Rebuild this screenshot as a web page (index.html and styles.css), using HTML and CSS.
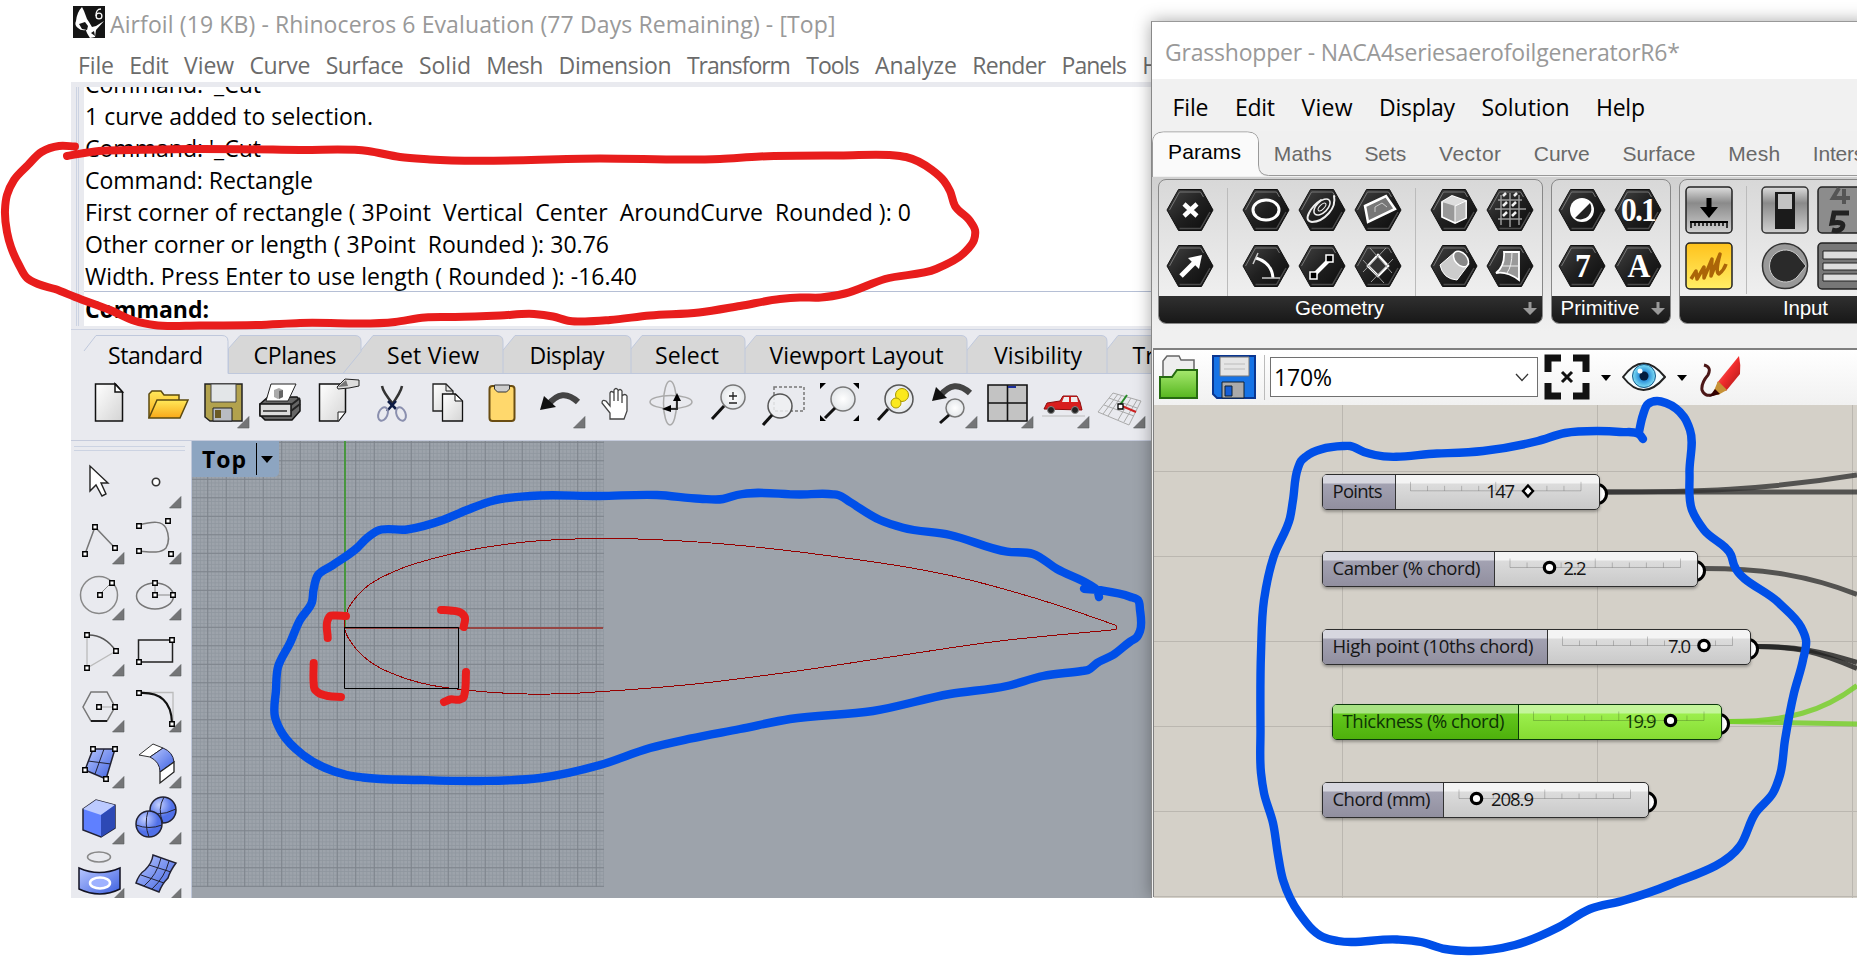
FILE: index.html
```html
<!DOCTYPE html>
<html lang="en">
<head>
<meta charset="utf-8">
<title>Airfoil - Rhinoceros and Grasshopper</title>
<link rel="stylesheet" href="styles.css">
</head>
<body>
<svg class="defs" width="0" height="0">
  <defs>
    <linearGradient id="gPaper" x1="0" y1="0" x2="1" y2="1"><stop offset="0" stop-color="#fff"/><stop offset="1" stop-color="#d4d4d4"/></linearGradient>
    <linearGradient id="gFold" x1="0" y1="0" x2="0" y2="1"><stop offset="0" stop-color="#ffe95a"/><stop offset="1" stop-color="#f9a818"/></linearGradient>
    <linearGradient id="gBlue" x1="0" y1="0" x2="1" y2="1"><stop offset="0" stop-color="#b9c8ff"/><stop offset="1" stop-color="#3c5fe0"/></linearGradient>
    <linearGradient id="gHex" x1="0" y1="0" x2="1" y2="1"><stop offset="0" stop-color="#444"/><stop offset=".5" stop-color="#202020"/><stop offset="1" stop-color="#0c0c0c"/></linearGradient>
    <linearGradient id="gBtn" x1="0" y1="0" x2="0" y2="1"><stop offset="0" stop-color="#dedede"/><stop offset=".35" stop-color="#8a8a8a"/><stop offset="1" stop-color="#d0d0d0"/></linearGradient>
    <linearGradient id="gYel" x1="0" y1="0" x2="0" y2="1"><stop offset="0" stop-color="#ffc21c"/><stop offset="1" stop-color="#ffee66"/></linearGradient>
    <linearGradient id="gGreen" x1="0" y1="0" x2="0" y2="1"><stop offset="0" stop-color="#a6e86e"/><stop offset="1" stop-color="#56b61f"/></linearGradient>
    <linearGradient id="gPen" x1="0" y1="0" x2="1" y2="1"><stop offset="0" stop-color="#ff8e8e"/><stop offset=".5" stop-color="#f02c2c"/><stop offset="1" stop-color="#a31515"/></linearGradient>
    <radialGradient id="gLens"><stop offset="0" stop-color="#fff"/><stop offset="1" stop-color="#e4e7ea"/></radialGradient>
    <radialGradient id="gBall" cx=".35" cy=".3"><stop offset="0" stop-color="#c5d1ff"/><stop offset="1" stop-color="#5070e8"/></radialGradient>
    <radialGradient id="gEye"><stop offset=".15" stop-color="#0a2d66"/><stop offset=".4" stop-color="#2b8ed8"/><stop offset="1" stop-color="#7fe0f5"/></radialGradient>
    <symbol id="hex" viewBox="0 0 48 44"><path d="M1 22 12.500 1.500h23L47 22 35.500 42.500h-23z" fill="url(#gHex)" stroke="#111"/><path d="M3.500 22 13.500 4h21l3 5" fill="none" stroke="#777"/><path d="M44 24 34.500 40.500h-21" fill="none" stroke="#4a4a4a" stroke-width="1.500"/></symbol>
    <symbol id="tri" viewBox="0 0 56 56"><path d="M53 41.500V53H41.500z" fill="#747577" stroke="#5d5e60" stroke-width=".6"/></symbol>
    <symbol id="h" viewBox="0 0 6 6" overflow="visible"><path d="M.75.75h4.500v4.500H.75z" fill="#fff" stroke="#000" stroke-width="1.400"/></symbol>
    <pattern id="minor" width="3.700" height="3.700" patternUnits="userSpaceOnUse" x="410.750" y="445.500"><path d="M.5 0v3.700M0 .5h3.700" stroke="#8f969e" stroke-width=".8" fill="none"/></pattern>
    <pattern id="major" width="18.500" height="18.500" patternUnits="userSpaceOnUse" x="410.750" y="441.800"><path d="M.5 0v18.500M0 .5h18.500" stroke="#7d838b" fill="none"/></pattern>
  </defs>
</svg>

<div class="screen">
  <section class="rhino">
    <header class="rhino-title">
      <svg class="logo" width="32" height="32" viewBox="0 0 32 32"><path fill="#151515" d="M0 0h32v32H0z"/><path fill="#fff" d="M3 15Q4 6 9 1l2 4 3 8 2 3 3 5 4-1 8-5-8 9-1 7-5 1q-4-6-4-8-5 1-8-2-4-3-2-7z"/><path d="m6 18 6-2 3 4-1 4-5-1zM18 27l3-2 1 5z" fill="#151515"/><circle cx="26" cy="10" r="2.900" stroke="#fff" stroke-width="1.300" fill="none"/><path d="M23.100 10q-.4-7 4.900-7" stroke="#fff" stroke-width="1.300" fill="none"/></svg>
      <span data-w="725.5">Airfoil (19 KB) - Rhinoceros 6 Evaluation (77 Days Remaining) - [Top]</span>
    </header>
    <nav class="rhino-menu">
      <span data-w="36">File</span><span data-w="39.5">Edit</span><span data-w="50">View</span><span data-w="61">Curve</span><span data-w="78">Surface</span><span data-w="52">Solid</span><span data-w="57">Mesh</span><span data-w="113">Dimension</span><span data-w="104">Transform</span><span data-w="53.5">Tools</span><span data-w="82">Analyze</span><span data-w="74">Render</span><span data-w="65.5">Panels</span><span data-w="45">Help</span>
    </nav>
    <div class="console">
      <div class="grip"></div>
      <div class="console-body">
        <div class="history">
          <p><span data-w="176">Command: '_Cut</span></p>
          <p><span data-w="288">1 curve added to selection.</span></p>
          <p><span data-w="176">Command: '_Cut</span></p>
          <p><span data-w="228">Command: Rectangle</span></p>
          <p><span data-w="826">First corner of rectangle ( 3Point&nbsp; Vertical&nbsp; Center&nbsp; AroundCurve&nbsp; Rounded ): 0</span></p>
          <p><span data-w="524">Other corner or length ( 3Point&nbsp; Rounded ): 30.76</span></p>
          <p><span data-w="552">Width. Press Enter to use length ( Rounded ): -16.40</span></p>
        </div>
        <div class="prompt"><span data-w="124">Command:</span></div>
      </div>
    </div>
    <div class="tabs">
      <svg class="tab-shapes" width="1080" height="40" viewBox="71 335 1080 40">
        <g fill="#d7d7d7" stroke="#bfc8dc">
          <path d="M1088 373.500 1118 335.500h60v38z"/>
          <path d="M948 373.500 979 335.500h122q6 0 6 6v32z"/>
          <path d="M725 373.500 756 335.500h205q6 0 6 6v32z"/>
          <path d="M611 373.500 642 335.500h97q6 0 6 6v32z"/>
          <path d="M484 373.500 515 335.500h110q6 0 6 6v32z"/>
          <path d="M342 373.500 373 335.500h124q6 0 6 6v32z"/>
          <path d="M228.500 373.500v-25L240 335.500h115q6 0 6 6v10L343 373.500z"/>
        </g>
        <path d="M84 351 96 335.500h126q6 0 6 6v32" fill="#e9eaef" stroke="#bfc8dc"/>
        <path d="M228 373.500H1151" stroke="#bfc8dc"/>
      </svg>
      <span data-w="95">Standard</span><span data-w="83">CPlanes</span><span data-w="92">Set View</span><span data-w="75">Display</span><span data-w="64">Select</span><span data-w="174">Viewport Layout</span><span data-w="88">Visibility</span><span>Transform</span>
    </div>
    <div class="toolbar">
      <svg viewBox="0 0 56 56"><path d="M11.500 9h20l7 8v29h-27z" fill="url(#gPaper)" stroke="#111" stroke-width="1.500"/><path d="M31 9v8h7.500z" fill="#fff" stroke="#111" stroke-width="1.500"/></svg>
      <svg viewBox="0 0 56 56"><path d="M9 43V19l3-3h9l3 4h15v7" fill="url(#gFold)" stroke="#5b4a10" stroke-width="1.500"/><path d="M9 43 17 25h31l-8 18z" fill="url(#gFold)" stroke="#5b4a10" stroke-width="1.500"/></svg>
      <svg viewBox="0 0 56 56"><path d="M9 9h37v37H14l-5-4z" fill="#b2a24d" stroke="#222" stroke-width="1.500"/><path d="M15 9h25v18H15z" fill="#e3e6e8" stroke="#444"/><path d="M17 33h19v13H17z" fill="#b9bcc2" stroke="#222"/><path d="M19 35h6v8h-6z" fill="#6b5a23"/><use href="#tri"/></svg>
      <svg viewBox="0 0 56 56"><path d="M8 29 16 22h29l3 3v11l-8 9H13l-5-5z" fill="#666" stroke="#111" stroke-width="1.500"/><path d="M8 29h31v12H8z" fill="#dcdcdc" stroke="#111" stroke-width="1.500"/><path d="M39 30 48 23M39 36l9-7" stroke="#222" stroke-width="2"/><path d="M14 26 19 9h25l-8 17z" fill="#fff" stroke="#222"/><path d="m22 15 5-2 4 2v7l-5 2-4-2z" fill="#aaa"/><path d="m27 16 4-1v7l-4 2z" fill="#666"/><path d="M11 36h24" stroke="#555" stroke-width="2"/></svg>
      <svg viewBox="0 0 56 56"><path d="M11.500 9h26l0 28-7 9h-19z" fill="url(#gPaper)" stroke="#111" stroke-width="1.500"/><path d="M37 37h-7v9" fill="#fff" stroke="#222"/><path d="m29 12 8-8 14 1v6l-10 2-11 1z" fill="#ddd" stroke="#222"/><path d="m30 12 8-7 2 6z" fill="#777"/></svg>
      <svg viewBox="0 0 56 56"><path d="M18 11q1 6 11 18M38 11q-1 6-11 20" stroke="#333" stroke-width="2.500" fill="none"/><path d="m24 26 8 8M32 26l-9 10" stroke="#0e1c44" stroke-width="2.600"/><ellipse cx="19" cy="39" rx="4.500" ry="7" transform="rotate(22 19 39)" fill="none" stroke="#8a8fae" stroke-width="2"/><ellipse cx="37" cy="39" rx="4.500" ry="7" transform="rotate(-22 37 39)" fill="none" stroke="#8a8fae" stroke-width="2"/></svg>
      <svg viewBox="0 0 56 56"><path d="M13 9h13l7 7v20H13z" fill="url(#gPaper)" stroke="#222" stroke-width="1.300"/><path d="M26 9v7h7" fill="none" stroke="#222"/><path d="M22.500 19h13l7 7v20h-20z" fill="url(#gPaper)" stroke="#111" stroke-width="1.300"/><path d="M35 19v7h7.500z" fill="#fff" stroke="#111"/></svg>
      <svg viewBox="0 0 56 56"><rect x="13.500" y="11" width="25" height="35" rx="3" fill="#ffd86c" stroke="#6a4d12" stroke-width="2"/><path d="M18.500 10h15v4l-3 3h-9l-3-3z" fill="#ccc" stroke="#333"/></svg>
      <svg viewBox="0 0 56 56"><path d="M16 30Q30 12 46 27" fill="none" stroke="#444" stroke-width="6"/><path d="M8 35 12 21l12 11z" fill="#111"/><use href="#tri"/></svg>
      <svg viewBox="0 0 56 56"><path d="M22 44v-6L14 28q0-4 4-2l4 5V18q1-3 4 0v8-11q2-3 4 0v11-10q2-3 4 0v12-7q3-3 5 0v15l-3 8z" fill="#fff" stroke="#444" stroke-width="1.300"/></svg>
      <svg viewBox="0 0 56 56"><ellipse cx="26" cy="28" rx="6.500" ry="22" fill="none" stroke="#aaa" stroke-width="1.500"/><ellipse cx="27" cy="27" rx="21" ry="6.500" fill="none" stroke="#aaa" stroke-width="1.500"/><path d="M33 33V24M24 34h10" stroke="#000" stroke-width="1.500"/><path d="m29 26 4-8 4 8zM27 30l-9 4 9 3z"/></svg>
      <svg viewBox="0 0 56 56"><circle cx="33" cy="22" r="12" fill="url(#gLens)" stroke="#777" stroke-width="1.500"/><path d="M24 31 12 44" stroke="#111" stroke-width="3"/><path d="M29 21h8M33 17v8M29 28h8" stroke="#222" stroke-width="1.300"/></svg>
      <svg viewBox="0 0 56 56"><path d="M18 12h30v24H18z" fill="none" stroke="#777" stroke-width="1.500" stroke-dasharray="3 2"/><circle cx="24" cy="31" r="12" fill="#eef0f2" fill-opacity=".85" stroke="#555" stroke-width="1.500"/><path d="M16 40 7 50" stroke="#111" stroke-width="3"/></svg>
      <svg viewBox="0 0 56 56"><circle cx="31" cy="24" r="12" fill="url(#gLens)" stroke="#777" stroke-width="1.500"/><path d="M23 33 13 43" stroke="#111" stroke-width="3"/><path d="M8 8h6l-6 6zM47 8v6l-6-6zM8 46v-6l6 6zM47 46h-6l6-6z"/></svg>
      <svg viewBox="0 0 56 56"><circle cx="31" cy="24" r="14" fill="url(#gLens)" stroke="#555" stroke-width="1.500"/><path d="M20 34 10 45" stroke="#111" stroke-width="3"/><circle cx="34" cy="20" r="6.500" fill="#fbe91d" stroke="#a89600"/><circle cx="28" cy="28" r="5" fill="#fbe91d" stroke="#a89600"/></svg>
      <svg viewBox="0 0 56 56"><path d="M16 21Q30 3 46 18" fill="none" stroke="#444" stroke-width="6"/><path d="M8 26 12 12l11 11z" fill="#111"/><circle cx="31" cy="33" r="9" fill="url(#gLens)" stroke="#777" stroke-width="1.500"/><path d="M25 40 16 48" stroke="#111" stroke-width="3"/><use href="#tri"/></svg>
      <svg viewBox="0 0 56 56"><path d="M8 10h39v36H8zM27.500 10v36M8 28h39" fill="#c3c3c3" stroke="#111" stroke-width="1.600"/><path d="M28 12h8" stroke="#1c2f9c" stroke-width="2"/><use href="#tri"/></svg>
      <svg viewBox="0 0 56 56"><path d="m8 34 3-6 13-2 3-5h14l3 6 2 8z" fill="#d81e1e" stroke="#8d0c0c"/><path d="M28 22h5v5h-7zM35 22h6l1 5h-7z" fill="#eee"/><circle cx="15" cy="35" r="3.500" fill="#222" stroke="#888"/><circle cx="39" cy="35" r="3.500" fill="#222" stroke="#888"/><path d="M6 41h43" stroke="#bbb"/><use href="#tri"/></svg>
      <svg viewBox="0 0 56 56"><path d="m21 18 28 8-12 24L6 37zM30 20 16 41M39 23 26 45M17 23l28 10M12 30l30 11M26 19 11 39M45 25 32 47" fill="none" stroke="#aaa"/><path d="m28 30 7-10" stroke="#288a28" stroke-width="2"/><path d="m30 31 14 6" stroke="#c22" stroke-width="2"/><path d="M26 29h5v5h-5z" fill="#fff" stroke="#000" stroke-width="1.300"/><use href="#tri"/></svg>
    </div>
    <div class="work">
      <div class="palette">
        <svg viewBox="0 0 56 56"><path d="M19 11v25l6-6 6 11 4-2-5-11h7z" fill="#fff" stroke="#222" stroke-width="1.400"/></svg>
        <svg viewBox="0 0 56 56"><circle cx="28" cy="27" r="3.700" fill="#fff" stroke="#333" stroke-width="1.600"/><use href="#tri"/></svg>
        <svg viewBox="0 0 56 56"><path d="m14 43 10-27 20 21" fill="none" stroke="#777" stroke-width="1.500"/><use href="#h" x="11" y="40" width="6" height="6"/><use href="#h" x="21" y="13" width="6" height="6"/><use href="#h" x="41" y="34" width="6" height="6"/><use href="#tri"/></svg>
        <svg viewBox="0 0 56 56"><path d="M11 14C26 10 34 10 38 17q5 11 0 20C32 43 22 41 11 40" fill="none" stroke="#777" stroke-width="1.500"/><use href="#h" x="8" y="12" width="6" height="6"/><use href="#h" x="37" y="7" width="6" height="6"/><use href="#h" x="8" y="37" width="6" height="6"/><use href="#tri"/><use href="#h" x="40" y="40" width="6" height="6"/></svg>
        <svg viewBox="0 0 56 56"><circle cx="28" cy="28" r="18.500" fill="none" stroke="#888" stroke-width="1.500"/><path d="m28 28 12-12" stroke="#888"/><use href="#h" x="26" y="25" width="6" height="6"/><use href="#h" x="38" y="13" width="6" height="6"/><use href="#tri"/></svg>
        <svg viewBox="0 0 56 56"><ellipse cx="27" cy="29" rx="18.500" ry="13" fill="none" stroke="#777" stroke-width="1.500"/><path d="M27 16v12h18" fill="none" stroke="#888"/><use href="#h" x="24" y="13" width="6" height="6"/><use href="#h" x="24" y="25" width="6" height="6"/><use href="#h" x="42" y="25" width="6" height="6"/><use href="#tri"/></svg>
        <svg viewBox="0 0 56 56"><path d="M16 12v33l29-17" fill="none" stroke="#bbb" stroke-width="1.300"/><path d="M16 12q17-1 29 16" fill="none" stroke="#555" stroke-width="1.500"/><use href="#h" x="13" y="9" width="6" height="6"/><use href="#h" x="42" y="25" width="6" height="6"/><use href="#h" x="13" y="42" width="6" height="6"/><use href="#tri"/></svg>
        <svg viewBox="0 0 56 56"><path d="M10.500 17h34v22h-34z" fill="none" stroke="#222" stroke-width="1.500"/><use href="#h" x="41" y="14" width="6" height="6"/><use href="#h" x="8" y="36" width="6" height="6"/><use href="#tri"/></svg>
        <svg viewBox="0 0 56 56"><path d="M20 13h16l8 15-8 14H20l-8-14z" fill="none" stroke="#777" stroke-width="1.500"/><path d="M20 42h16" stroke="#000" stroke-width="1.600"/><path d="M28 28h16" stroke="#aaa"/><use href="#h" x="25" y="25" width="6" height="6"/><use href="#h" x="41" y="25" width="6" height="6"/><use href="#tri"/></svg>
        <svg viewBox="0 0 56 56"><path d="M11 13.500h34V44" fill="none" stroke="#bbb" stroke-width="1.300"/><path d="M11 14q32-2 33 30" fill="none" stroke="#111" stroke-width="2.200"/><use href="#h" x="8" y="11" width="6" height="6"/><use href="#tri"/><use href="#h" x="41" y="42" width="6" height="6"/></svg>
        <svg viewBox="0 0 56 56"><path d="m22 14 22 0-9 30-21-9z" fill="url(#gBlue)" stroke="#223" stroke-width="1.500"/><path d="m33 14-9 25M17 26l23 3" stroke="#223" fill="none"/><use href="#h" x="19" y="11" width="6" height="6"/><use href="#h" x="41" y="11" width="6" height="6"/><use href="#h" x="11" y="32" width="6" height="6"/><use href="#h" x="32" y="41" width="6" height="6"/><use href="#tri"/></svg>
        <svg viewBox="0 0 56 56"><path d="m11 20 14-11 10 4-13 9z" fill="#fff" stroke="#333"/><path d="m22 22 13-9q10 4 11 14L32 37q0-10-10-15z" fill="url(#gBlue)" stroke="#223"/><path d="M32 37 46 27v10L32 48z" fill="#fff" stroke="#222" stroke-width="1.300"/><use href="#tri"/></svg>
        <svg viewBox="0 0 56 56"><path d="m12 18 13-9 19 5v23l-14 9-18-7z" fill="#5f80ff" stroke="#223" stroke-width="1.500"/><path d="m12 18 13-9 19 5-14 10z" fill="#bccaff"/><path d="m30 24 14-10v23l-14 9z" fill="#2d49b5"/><use href="#tri"/></svg>
        <svg viewBox="0 0 56 56"><circle cx="35" cy="19" r="13" fill="url(#gBall)" stroke="#223" stroke-width="1.500"/><circle cx="21" cy="33" r="13" fill="url(#gBall)" stroke="#223" stroke-width="1.500"/><path d="M8 34q13 5 26 0M20 20q-4 13 1 26M29 23q9 0 19-5M36 6q-7 12-1 26" fill="none" stroke="#223"/><use href="#tri"/></svg>
        <svg viewBox="0 0 56 56"><ellipse cx="28" cy="10" rx="11.500" ry="5" fill="none" stroke="#888" stroke-width="1.500"/><path d="M8 21q20 9 41 0v21q-20 10-41 0z" fill="url(#gBlue)" stroke="#112" stroke-width="1.500"/><ellipse cx="29" cy="36" rx="10" ry="5.500" fill="#9fb2ff" stroke="#fff" stroke-width="2.500"/><use href="#tri"/></svg>
        <svg viewBox="0 0 56 56"><path d="m25 8 23 8q-6 8-8 15-6 6-9 14L8 36q3-9 9-13 7-7 8-15z" fill="url(#gBlue)" stroke="#223" stroke-width="1.500"/><path d="M33 11q-4 17-17 28M41 14q-4 16-17 28M21 18l22 7M13 28l23 8" stroke="#223" fill="none"/><use href="#tri"/></svg>
      </div>
      <div class="viewport">
        <svg class="drawing" width="959" height="457" viewBox="192 441 959 457">
          <path d="M192 441h412v446H192z" fill="url(#minor)"/>
          <path d="M192 441h412v446H192z" fill="url(#major)"/>
          <path d="M345 441v187" stroke="#48963f" stroke-width="2"/>
          <path d="M345 628h258" stroke="#964644" stroke-width="2"/>
          <path class="airfoil" data-smooth="1116.5,625.5 1057,605 957,577 823,555 690,541.500 605,538.500 520,542.500 437,557.500 400,569 363,590 347.700,610 344.500,628 357,650 375,665 400,676.500 430,685 457,689 510,693.500 570,693.500 600,691.700 690,684.500 790,672 890,657 1000,641 1116.5,629.500"/>
          <path d="M1116.5 629.500v-4" stroke="#960000"/>
          <path d="M344.500 627.500h114v61h-114z" fill="none" stroke="#000"/>
        </svg>
        <div class="view-tab"><span data-w="44">Top</span><i></i><b></b></div>
      </div>
    </div>
  </section>

  <section class="gh">
    <header class="gh-title"><span data-w="515">Grasshopper - NACA4seriesaerofoilgeneratorR6*</span></header>
    <nav class="gh-menu"><span data-w="36">File</span><span data-w="40">Edit</span><span data-w="51">View</span><span data-w="76">Display</span><span data-w="88">Solution</span><span data-w="49">Help</span></nav>
    <div class="gh-tabs">
      <svg class="gh-tab-shape" width="706" height="46" viewBox="1151 131 706 46"><path d="M1152.500 177v-34q0-11 11-11h84q11 0 11 11v22q0 10 10 10.500H1857" fill="none" stroke="#999"/><path d="M1153 176v-33q0-10.500 10.500-10.500h84q10.500 0 10.500 10.500v22q0 8 5 11z" fill="#fafafa"/></svg>
      <span class="active" data-w="73">Params</span><span data-w="58">Maths</span><span data-w="42">Sets</span><span data-w="62">Vector</span><span data-w="56">Curve</span><span data-w="73">Surface</span><span data-w="52">Mesh</span><span data-w="79">Intersect</span>
    </div>
    <div class="ribbon">
      <div class="panel geometry">
        <div class="icons">
          <div class="grid">
            <svg viewBox="0 0 48 44"><use href="#hex"/><path d="m18 16 13 12M31 16 18 28" stroke="#fff" stroke-width="4.500"/></svg>
            <svg viewBox="0 0 48 44"><use href="#hex"/><path d="M15 32 29 18" stroke="#fff" stroke-width="5"/><path d="m22 14 14-3-3 14z" fill="#fff"/></svg>
          </div>
          <hr>
          <div class="grid">
            <svg viewBox="0 0 48 44"><use href="#hex"/><ellipse cx="24" cy="22" rx="13" ry="10" fill="none" stroke="#fff" stroke-width="3"/></svg>
            <svg viewBox="0 0 48 44"><use href="#hex"/><g fill="none" stroke="#eee" stroke-linecap="round"><path d="M36 8q2 9-5 17-8 9-17 9-7-1-3-9 4-8 12-13" stroke-width="2"/><ellipse cx="24" cy="19" rx="10" ry="5.500" stroke-width="1.500" transform="rotate(-45 24 19)"/><ellipse cx="24" cy="19" rx="5" ry="2.200" transform="rotate(-45 24 19)"/></g></svg>
            <svg viewBox="0 0 48 44"><use href="#hex"/><path d="m11 18 21-10 9 13-27 13z" fill="#777" stroke="#fff" stroke-width="2.500"/><path d="M21 24v-5l7-4 5 4" fill="none" stroke="#ccc"/></svg>
            <svg viewBox="0 0 48 44"><use href="#hex"/><path d="M14 14q16 5 17 20" fill="none" stroke="#fff" stroke-width="3"/><path d="M11 20 16 9M20 34h18" stroke="#ccc" stroke-width="1.500"/></svg>
            <svg viewBox="0 0 48 44"><use href="#hex"/><path d="m16 31 16-16" stroke="#fff" stroke-width="4"/><path d="M12 28h7v7h-7zM28 11h7v7h-7z" fill="#000" stroke="#fff" stroke-width="1.500"/></svg>
            <svg viewBox="0 0 48 44"><use href="#hex"/><path d="m24 11 10 11-10 10-10-10z" fill="#333" stroke="#fff" stroke-width="2.500"/><path d="M16 4 38 29M32 4 9 28M9 16 30 39M39 15 17 38" stroke="#999"/></svg>
          </div>
          <hr>
          <div class="grid">
            <svg viewBox="0 0 48 44"><use href="#hex"/><path d="m12 14 10-6 14 5v17l-11 5-13-6z" fill="#999" stroke="#fff" stroke-width="1.800"/><path d="m12 14 10-6 14 5-11 5z" fill="#ddd"/><path d="m25 18 11-5v17l-11 5z" fill="#bbb" stroke="#fff"/></svg>
            <svg viewBox="0 0 48 44"><use href="#hex"/><path d="M12 12h24M9 21h31M12 31h24M15 7v30M24 5v34M33 7v30" stroke="#999" fill="none" stroke-width="1.500"/><path d="m17 18 4-4M26 18l4-4M17 28l4-4M26 28l4-4M17 8l3-3M28 8l3-3" stroke="#eee" stroke-width="2.500"/></svg>
            <svg viewBox="0 0 48 44"><use href="#hex"/><path d="M10 21 25 8q10-2 14 12L27 36q-14-1-17-15z" fill="#ccc" stroke="#fff"/><ellipse cx="31" cy="15" rx="6" ry="9" transform="rotate(-42 31 15)" fill="#888" stroke="#fff" stroke-width="1.500"/></svg>
            <svg viewBox="0 0 48 44"><use href="#hex"/><path d="M18 8h15v28q-12-9-23-7 9-7 8-21z" fill="#999" stroke="#fff" stroke-width="1.800"/><path d="M26 8q0 14-5 21M17 22h16" stroke="#eee" fill="none"/></svg>
          </div>
        </div>
        <div class="label"><span data-w="89">Geometry</span><svg width="14" height="14" viewBox="0 0 14 14"><path d="M5.500 0h3v6H14l-7 7-7-7h5.500z" fill="#999"/></svg></div>
      </div>
      <div class="panel primitive">
        <div class="icons">
          <div class="grid">
            <svg viewBox="0 0 48 44"><use href="#hex"/><circle cx="24" cy="22" r="12" fill="#fff"/><path d="M17 30A11 11 0 0 0 32 15z" fill="#222"/></svg>
            <div class="glyph"><svg viewBox="0 0 48 44"><use href="#hex"/></svg><em>0.1</em></div>
            <div class="glyph"><svg viewBox="0 0 48 44"><use href="#hex"/></svg><em>7</em></div>
            <div class="glyph"><svg viewBox="0 0 48 44"><use href="#hex"/></svg><em>A</em></div>
          </div>
        </div>
        <div class="label"><span data-w="79">Primitive</span><svg width="14" height="14" viewBox="0 0 14 14"><path d="M5.500 0h3v6H14l-7 7-7-7h5.500z" fill="#999"/></svg></div>
      </div>
      <div class="panel input">
        <div class="icons">
          <div class="grid">
            <svg viewBox="0 0 48 48"><rect x="1" y="1" width="46" height="46" rx="4" fill="url(#gBtn)" stroke="#222" stroke-width="1.500"/><path d="M24 12v12" stroke="#000" stroke-width="5"/><path d="m15 21 9 11 9-11zM5 35h38v2H5z"/><path d="M6 36v6M10 36v4M14 36v4M18 36v4M22 36v4M26 36v4M30 36v4M34 36v4M38 36v4M42 36v6" stroke="#000" stroke-width="1.500"/></svg>
            <svg viewBox="0 0 48 48"><rect x="1" y="1" width="46" height="46" rx="4" fill="url(#gYel)" stroke="#222" stroke-width="1.500"/><path d="m6 37 5-8 1 8 7-12v11l8-19-1 17 9-22q-5 19-1 20 5-4 7-10" fill="none" stroke="#ab6508" stroke-width="3.500" stroke-linejoin="round"/></svg>
          </div>
          <hr>
          <div class="grid two">
            <svg viewBox="0 0 48 48"><rect x="1" y="1" width="46" height="46" rx="4" fill="url(#gBtn)" stroke="#333" stroke-width="1.500"/><path d="M14 6h20v37H14z" fill="#1b1b1b"/><path d="M17 8h14v15H17z" fill="#c3c3c3"/></svg>
            <svg viewBox="0 0 48 48"><rect x="1" y="1" width="46" height="46" rx="4" fill="#8c8c8c" stroke="#222" stroke-width="1.500"/><path d="m22 2-6 10h17M27 3v15" fill="none" stroke="#555" stroke-width="4"/><path d="M32 27H17l-2 10q14-2 10 5-3 4-10 2" fill="none" stroke="#222" stroke-width="5"/></svg>
            <svg viewBox="0 0 48 48"><circle cx="24" cy="24" r="22.500" fill="#999" stroke="#333" stroke-width="1.500"/><path d="M37 14a16 16 0 1 0 0 20l8-10z" fill="#2a2a2a" stroke="#ccc"/></svg>
            <svg viewBox="0 0 48 48"><rect x="1" y="1" width="46" height="46" rx="4" fill="#777" stroke="#222" stroke-width="1.500"/><path d="M6 9h42v8H6zM6 21h42v7H6zM6 32h42v7H6z" fill="#ddd" stroke="#222"/></svg>
          </div>
        </div>
        <div class="label"><span data-w="45">Input</span></div>
      </div>
    </div>
    <div class="canvas-frame">
      <div class="canvas-bar">
        <svg class="open" width="40" height="44" viewBox="0 0 40 44"><path d="M4 22V6l4-5h12l2 4h13v17" fill="#eee" stroke="#666" stroke-width="1.500"/><path d="M1 43V22h12l5-7h20v28z" fill="url(#gGreen)" stroke="#256b10" stroke-width="2"/></svg>
        <svg class="save" width="44" height="44" viewBox="0 0 44 44"><path d="M1 1h42v42H5l-4-4z" fill="#1673e6" stroke="#0a3690" stroke-width="2"/><path d="M8 2h29v19H8z" fill="#e5e5e5" stroke="#777"/><path d="M12 9h21M12 14h21" stroke="#bbb"/><path d="M10 27h22v16H10z" fill="#aaa" stroke="#123"/><path d="M13 31h7v10h-7z" fill="#155ed6" stroke="#123"/></svg>
        <i class="sep"></i>
        <div class="zoom"><span data-w="58">170%</span><svg width="14" height="9" viewBox="0 0 14 9"><path d="m1 1 6 6.500L13 1" fill="none" stroke="#333" stroke-width="1.300"/></svg></div>
        <svg class="fit" width="46" height="46" viewBox="0 0 46 46"><path d="M4 18V4h13M29 4h13v14M42 29v13H29M17 42H4V29" fill="none" stroke="#111" stroke-width="7"/><path d="m18 18 10 10M28 18 18 28" stroke="#111" stroke-width="3"/></svg>
        <b class="drop"></b>
        <svg class="eye" width="44" height="30" viewBox="0 0 44 30"><path d="M1 15Q21-12 43 15 21 41 1 15z" fill="#f3fbfd" stroke="#222" stroke-width="2"/><circle cx="22" cy="14" r="11.500" fill="url(#gEye)" stroke="#175b8c"/><circle cx="22" cy="14" r="4.500" fill="#041c3e"/><circle cx="18" cy="9" r="2.500" fill="#fff"/></svg>
        <b class="drop"></b>
        <svg class="pen" width="44" height="42" viewBox="0 0 44 42"><path d="M4 9q8 2 4 10-7 8-6 15 3 8 12 4" fill="none" stroke="#4c1717" stroke-width="3"/><path d="M17 27 39 0q2 9 1 18L26 35z" fill="url(#gPen)"/><path d="m18 25 9 9-9 5-5-2z" fill="#c79136"/><path d="m15 33 5 5-11 3z" fill="#300"/></svg>
      </div>
      <div class="canvas">
        <svg class="wires" width="703" height="493" viewBox="1154 405 703 493">
          <path d="M1342.500 405v493M1597.500 405v493M1852.500 405v493M1154 471.500h703M1154 556.500h703M1154 641.500h703M1154 726.500h703M1154 811.500h703M1154 896.500h703" stroke="#bbb7b0"/>
          <g fill="none" stroke-width="5" stroke-opacity=".8">
            <path d="M1605 492h252" stroke="#333"/>
            <path d="M1605 492c90 0 160-2 252-17" stroke="#333"/>
            <path d="M1704 568.500c60 0 105 7 153 26" stroke="#333"/>
            <path d="M1757 646.500c40 0 66 5 100 16" stroke="#222"/>
            <path d="M1757 646.500c40 0 60 5 100 22" stroke="#222"/>
            <path d="M1728 721.500 1857 724" stroke="#73cf24"/>
            <path d="M1728 721.500c60 0 95-10 129-36" stroke="#73cf24"/>
          </g>
        </svg>
        <div class="node n1"><div class="name"><span data-w="50">Points</span></div><svg class="track" width="205" height="36" viewBox="1395.500 474 205 36" data-ticks="1412,1582.500,491.800"><path d="m1529.500 486.500 5 5.500-5 5.500-5-5.500z" fill="#fff" stroke="#000" stroke-width="2.400"/></svg><span class="value v1" data-w="29">147</span></div>
        <div class="node n2"><div class="name"><span data-w="148">Camber (% chord)</span></div><svg class="track" width="204" height="36" viewBox="1494 551 204 36" data-ticks="1511,1681.500,568.500"><circle cx="1550.500" cy="568.500" r="5.200" fill="#fff" stroke="#000" stroke-width="3.200"/></svg><span class="value v2" data-w="23">2.2</span></div>
        <div class="node n3"><div class="name"><span data-w="201">High point (10ths chord)</span></div><svg class="track" width="204" height="36" viewBox="1547 629 204 36" data-ticks="1563.500,1733.500,646.500"><circle cx="1705" cy="646.500" r="5.200" fill="#fff" stroke="#000" stroke-width="3.200"/></svg><span class="value v3" data-w="23">7.0</span></div>
        <div class="node n4"><div class="name"><span data-w="162">Thickness (% chord)</span></div><svg class="track" width="204" height="36" viewBox="1518 704 204 36" data-ticks="1534.500,1705,721.500"><circle cx="1671.500" cy="721.500" r="5.200" fill="#fff" stroke="#000" stroke-width="3.200"/></svg><span class="value v4" data-w="32">19.9</span></div>
        <div class="node n5"><div class="name"><span data-w="98">Chord (mm)</span></div><svg class="track" width="206" height="36" viewBox="1443 782 206 36" data-ticks="1460,1631.500,799.500"><circle cx="1477.500" cy="799.500" r="5.200" fill="#fff" stroke="#000" stroke-width="3.200"/></svg><span class="value v5" data-w="43">208.9</span></div>
      </div>
    </div>
  </section>

  <svg class="ink" width="1857" height="958" viewBox="0 0 1857 958">
    <g class="red">
      <path data-smooth="75,146.500 59,146 41.500,152 28,165 14,180 7,195 5,210 7,232 11,247 19,265 27,278 38,284 55,289 75,297 110,310 135,321 154,325 200,325.500 257,325 300,323 395,322 425,317.500 455,317 500,315.500 534,314 553,316.500 570,321 585,321.500 610,320 650,315.500 699,312.500 740,306 780,299 800,297.500 821,297.500 845,293.500 885,279 936,269 964,253 974,240 975,230 970,221 955,206 950,191 944,181 932,170 906,157 900,156 840,155.500 760,156.500 720,159 600,158.500 430,159.500 400,157 368,151 300,150 190,149 130,150 99,151 67,156"/>
      <path data-smooth="346,616 334,615.500 330,616 327.700,620 327.700,638"/>
      <path data-smooth="313.700,663 313.700,683 314.500,689 318,692.500 328,696 341,697"/>
      <path data-smooth="441,610 450,610.500 462,613.500 464.700,617 463.700,627"/>
      <path data-smooth="466,672 464.500,694 463.500,697.500 460,699.500 450,699.500 444,702"/>
    </g>
    <g class="blue">
      <path data-smooth="1099,597 1097,590 1090,585 1057,569 1033,554 1007,551.700 950,535 903,527.700 880,520 850,502 838,495 833,494.300 800,494.500 737,495 723,499 700,498.700 657,495 600,496 530,496 493,500.700 467,510 443,520 407,529.500 377,531 367,538 357,548 333,565 318,575 313.500,590 312,602 300,620 290,643 278,667 276,690 275,717 282,733 303,755 347,775 363,777.500 420,780 480,781 540,778 600,765 650,748 690,738.700 740,729 790,719 873,711 950,694 1007,686 1043,676 1082,671 1088,670 1097,663 1113,655 1130,641.700 1137,637 1140,631 1140,610 1138,600 1130,596.700 1103,590.700 1084,588.700"/>
      <path data-smooth="1643,439 1640,435 1620,432 1597,431 1565,433 1538,441 1483,451 1437,453.500 1375,455 1364,452 1350,446 1343,446 1306,456.500 1301,461 1298,468 1293,500 1290,518 1273.500,557 1264,600 1261,653 1260.500,730 1261,773 1264,793 1273,823 1278,855 1283,880 1299,913 1323,937 1338,941 1397,939.500 1421,942 1445,949 1468,951 1515,945 1559,927 1590,909 1622,901 1669,885 1740,846 1755.500,813 1773,793 1780,775 1785,740 1794,693 1803,660 1806,640 1801,627 1779,603 1734,565 1731,555 1704,530 1692,510 1689.500,473 1690,430 1684,417 1666,403 1657,401 1648,404 1643,415 1639,432"/>
    </g>
  </svg>
</div>
<script src="main.js"></script>
</body>
</html>
```
FILE: styles.css
```css
* { box-sizing: border-box; }
body { margin: 0; background: #fff; font-family: "Open Sans", "Noto Sans", sans-serif; }
p { margin: 0; }
.defs { position: absolute; }
.screen { position: relative; width: 1857px; height: 958px; overflow: hidden; background: #fff; }
[data-w] { display: inline-block; flex: none; white-space: nowrap; }

.rhino { width: 1151px; height: 898px; padding-left: 71px; overflow: hidden; font-size: 23px; color: #000; }
.rhino-title { display: flex; align-items: center; gap: 5px; height: 46px; padding: 1px 0 0 2px; color: #999; }
.logo { margin-top: -3px; }
.rhino-menu { display: flex; align-items: center; gap: 15.300px; height: 36px; padding: 2px 0 0 7px; color: #6b6b6b; overflow: hidden; line-height: 33px; }
.console { display: flex; height: 248px; padding: 5px 0 3px 5px; background: #e9eaef; border-bottom: 1px solid #cdd3e2; }
.grip { width: 3px; margin-right: 5px; border: solid #ccd3e2; border-width: 0 1px; }
.console-body { flex: 1; background: #fff; }
.history { height: 205px; overflow: hidden; border-bottom: 1px solid #b5bfd5; }
.history p { height: 32px; padding-left: 1px; line-height: 32px; }
.history p:first-child { margin-top: -19px; }
.prompt { height: 35px; padding-left: 1px; line-height: 35px; font-weight: 700; }
.tabs { position: relative; display: flex; height: 45px; padding: 7px 0 0 37px; background: #e9eaef; line-height: 37px; }
.tabs span { position: relative; flex: none; margin-right: 50.500px; }
.tab-shapes { position: absolute; left: 0; top: 5px; }
.toolbar { display: flex; height: 66px; padding: 0 0 0 13px; background: #e9eaef; border-bottom: 1px solid #c5cbdc; }
.toolbar svg { flex: none; width: 56px; height: 56px; }
.work { display: flex; height: 457px; }
.palette { position: relative; display: grid; grid-template-columns: 56px 56px; grid-auto-rows: 56px; gap: 0 1px; align-content: start; width: 121px; height: 457px; padding-top: 14px; background: #e9eaef; border-right: 1px solid #c0c8da; overflow: hidden; }
.palette::before { content: ""; position: absolute; left: 3px; top: 5px; width: 111px; height: 3px; border: solid #ccd3e2; border-width: 1px 0; }
.palette svg { width: 56px; height: 56px; }
.viewport { position: relative; flex: 1; background: #9da3ab; overflow: hidden; }
.drawing { display: block; }
.airfoil { fill: none; stroke: #960000; stroke-width: 1px; shape-rendering: crispEdges; }
.view-tab { position: absolute; left: 0; top: 0; display: flex; align-items: center; width: 87px; height: 36px; padding-left: 10px; background: #8da5c1; border-radius: 0 0 5px 0; font-weight: 700; font-size: 23px; line-height: 34px; }
.view-tab i { width: 1px; height: 32px; margin: 0 4px 0 10px; background: #000; }
.view-tab b { border: solid transparent; border-width: 7px 6.500px 0; border-top-color: #000; }

.gh { position: absolute; left: 1151px; top: 21px; width: 720px; height: 877px; background: #f0f0f0; border-top: 1px solid #999; border-left: 1px solid #888; box-shadow: 0 0 16px rgba(0, 0, 0, .35); clip-path: inset(-21px 0 0 -20px); }
.gh-title { height: 57px; padding-left: 13px; background: #fff; color: #999; font-size: 23px; line-height: 60px; }
.gh-menu { display: flex; gap: 26.500px; height: 52px; padding-left: 20.500px; background: #f1f1f1; font-size: 23px; line-height: 56px; }
.gh-tabs { position: relative; display: flex; gap: 32.700px; height: 46px; padding-left: 16px; font-family: "Liberation Sans", Arial, sans-serif; font-size: 21px; line-height: 46px; color: #696969; }
.gh-tab-shape { position: absolute; left: -1px; top: 0; }
.gh-tabs span { position: relative; line-height: 46px; }
.gh-tabs .active { color: #000; line-height: 41px; }
.ribbon { display: flex; gap: 8px; height: 171px; padding: 2px 0 0 6px; background: linear-gradient(#d0d0d0, #f0f0f0 90%); }
.panel { flex: none; height: 145px; border: 1px solid #888; border-radius: 8px; overflow: hidden; background: linear-gradient(#d8d8d8, #efefef 80%); }
.geometry { width: 385px; }
.primitive { width: 120px; }
.input { width: 253px; }
.icons { display: flex; height: 116px; padding: 8px 0 0 6.500px; }
.icons hr { width: 1px; height: 108px; margin: 0 14px 0 13px; border: 0; background: #bbb; }
.icons .grid { display: grid; grid-auto-flow: row; grid-template-columns: 48px; gap: 12px 8px; align-content: start; }
.geometry .grid:nth-of-type(2) { grid-template-columns: repeat(3, 48px); }
.geometry .grid:nth-of-type(3), .primitive .grid, .icons .two { grid-template-columns: 48px 48px; }
.icons svg { display: block; width: 48px; height: 44px; }
.primitive .icons { padding-left: 5.500px; }
.input .icons { padding: 6px 0 0 5px; }
.input .icons .grid { gap: 8px; }
.input .icons svg { height: 48px; }
.glyph { position: relative; width: 48px; height: 44px; }
.glyph em { position: absolute; inset: 0; text-align: center; color: #fff; font: 700 34px/44px "Liberation Serif", serif; letter-spacing: -2px; transform: scaleX(.93); }
.label { position: relative; height: 29px; background: linear-gradient(#303030, #161616); color: #fff; text-align: center; font: 20.500px/24px "Liberation Sans", Arial, sans-serif; }
.label svg { position: absolute; right: 5px; top: 6px; }
.primitive .label { padding-right: 22px; }
.geometry .label { padding-right: 22px; }
.canvas-frame { margin-left: 1px; border-top: 2px solid #808080; border-left: 1px solid #808080; height: 549px; }
.canvas-bar { display: flex; align-items: center; height: 55px; padding: 0 0 1px 5px; background: linear-gradient(#fff, #f1f1f1); }
.canvas-bar svg { flex: none; }
.save { margin-left: 13px; }
.sep { width: 1px; height: 45px; margin: 0 5px 0 8px; background: #bbb; }
.zoom { display: flex; align-items: center; justify-content: space-between; width: 268px; height: 40px; padding: 0 8px 0 3px; border: 1px solid #707070; background: #fff; font-size: 23px; line-height: 38px; }
.fit { margin-left: 6px; }
.drop { margin: 2px 11px 0; border: solid transparent; border-width: 6px 5px 0; border-top-color: #000; }
.eye { margin-left: 0; }
.pen { margin-left: 2px; }
.canvas { position: relative; height: 493px; background: #d4d0c8; overflow: hidden; isolation: isolate; }
.wires { position: relative; z-index: -2; display: block; }
.node { position: absolute; display: flex; height: 36px; border: 1.500px solid #2d2d2d; border-radius: 5px; background: linear-gradient(#f4f4f4 0 8px, #dcdcdc 9px, #c9c9c9); box-shadow: 0 2px 3px rgba(0, 0, 0, .3); font-size: 18.500px; line-height: 32px; color: #151515; }
.node::after { content: ""; position: absolute; z-index: -1; right: -8.500px; top: 8px; width: 16px; height: 16px; border: 3px solid #000; border-radius: 50%; background: #fff; }
.node .name { flex: none; height: 34px; padding-left: 9.500px; border-right: 1.500px solid #333; border-radius: 3px 0 0 3px; background: linear-gradient(#d7d7df 0 8px, #a3a2b2 9px, #918f9f); }
.track { position: absolute; right: 0; top: -1.500px; }
.value { position: absolute; top: 0; }
.n1 { left: 168px; top: 68.500px; width: 278px; } .n1 .name { width: 73px; } .v1 { left: 163px; }
.n2 { left: 168px; top: 145.500px; width: 376px; } .n2 .name { width: 172px; } .v2 { left: 240.500px; }
.n3 { left: 168px; top: 223.500px; width: 429px; } .n3 .name { width: 225px; } .v3 { left: 345px; }
.n4 { left: 178px; top: 298.500px; width: 390px; border-color: #0c3a0c; background: linear-gradient(#c4f59c 0 8px, #9bee4c 9px, #86dc32); }
.n4 .name { width: 186px; border-color: #0c3a0c; background: linear-gradient(#a8e284 0 8px, #62c61c 9px, #4eb10c); color: #0d3305; } .v4 { left: 291.500px; color: #143c05; }
.n5 { left: 168px; top: 376.500px; width: 327px; } .n5 .name { width: 121px; } .v5 { left: 168px; }

.ink { position: absolute; left: 0; top: 0; z-index: 5; fill: none; stroke-linecap: round; stroke-linejoin: round; }
.red { stroke: #e81d1c; stroke-width: 8; }
.blue { stroke: #004fe8; stroke-width: 8.400; }
```
FILE: main.js
```js
document.querySelectorAll('[data-w]').forEach(function (el) {
  var want = parseFloat(el.dataset.w);
  var have = el.getBoundingClientRect().width;
  el.style.letterSpacing = ((want - have) / (el.textContent.length - 1)).toFixed(3) + 'px';
  el.style.width = want + 'px';
});

// Smooth freehand strokes through their sample points.
document.querySelectorAll('[data-smooth]').forEach(function (el) {
  var p = el.dataset.smooth.trim().split(/\s+/).map(function (s) { return s.split(',').map(Number); });
  var n = p.length - 1;
  function unit(i) {
    var dx = p[i + 1][0] - p[i][0], dy = p[i + 1][1] - p[i][1], l = Math.hypot(dx, dy);
    return [dx / l, dy / l, l];
  }
  function tangent(i) {
    if (i === 0) return unit(0);
    if (i === n) return unit(n - 1);
    var u = unit(i - 1), v = unit(i), s = u[2] + v[2];
    return [(u[0] * v[2] + v[0] * u[2]) / s, (u[1] * v[2] + v[1] * u[2]) / s];
  }
  var d = 'M' + p[0];
  for (var i = 0; i < n; i++) {
    var b = p[i], c = p[i + 1], k = unit(i)[2] / 3, t = tangent(i), w = tangent(i + 1);
    d += 'C' + [b[0] + t[0] * k, b[1] + t[1] * k, c[0] - w[0] * k, c[1] - w[1] * k, c[0], c[1]].join(' ');
  }
  el.setAttribute('d', d);
});

// Slider scales: eleven ticks, taller at both ends and the middle.
document.querySelectorAll('[data-ticks]').forEach(function (svg) {
  var v = svg.dataset.ticks.split(',').map(Number), d = 'M' + v[0] + ' ' + v[2] + 'H' + v[1];
  for (var i = 0; i <= 10; i++) {
    d += 'M' + (v[0] + (v[1] - v[0]) * i / 10) + ' ' + v[2] + 'v' + (i % 5 ? -5 : -9);
  }
  var path = document.createElementNS('http://www.w3.org/2000/svg', 'path');
  path.setAttribute('d', d);
  path.setAttribute('stroke', 'rgba(0,0,0,.2)');
  path.setAttribute('fill', 'none');
  svg.insertBefore(path, svg.firstChild);
});
```
